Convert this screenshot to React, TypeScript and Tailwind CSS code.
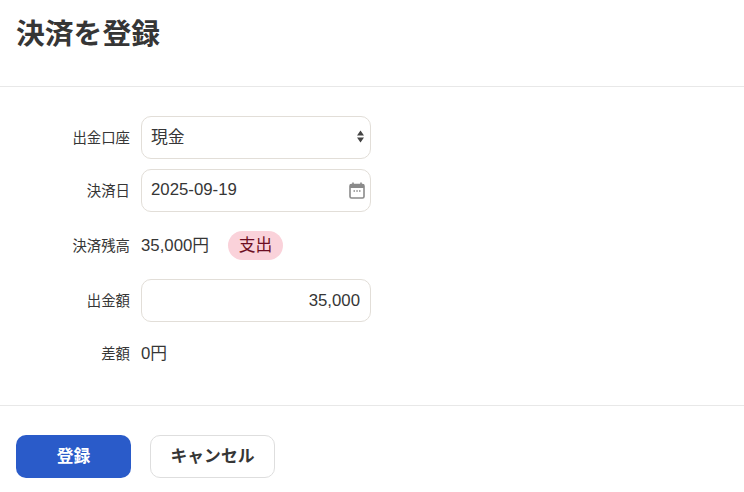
export default function App() {
  const label = "w-[130px] shrink-0 text-right text-[14.4px] leading-[20px] text-[#363636]";
  const box = "h-[43px] w-[230px] rounded-[10px] border border-[#e2ded8] bg-white text-[16.8px] text-[#363636] outline-none";
  return (
    <div className="h-[492px] w-[744px] overflow-hidden bg-white font-['Liberation_Sans','Noto_Sans_CJK_JP',sans-serif] text-[#363636]">
      <header className="flex h-[87px] items-start border-b border-[#e8e8e8] px-4 pt-[18px]">
        <h1 className="text-[28.8px] font-bold leading-[33px] text-[#363636]">決済を登録</h1>
      </header>
      <main className="flex h-[319px] flex-col border-b border-[#e8e8e8] pt-[29px]">
        <div className="flex h-[43px] items-center gap-[11px]">
          <div className={label}>出金口座</div>
          <div className="relative">
            <select defaultValue="現金" className={`${box} appearance-none border-[#dfdcdc] pl-[9px] pr-6`}>
              <option>現金</option>
            </select>
            <svg className="pointer-events-none absolute right-[7px] top-[14px]" width="7" height="13" viewBox="0 0 7 13" fill="#444">
              <path d="M3.5 0.5L7 5.5H0Z" />
              <path d="M0 7.5H7L3.5 12.5Z" />
            </svg>
          </div>
        </div>
        <div className="mt-[10px] flex h-[43px] items-center gap-[11px]">
          <div className={label}>決済日</div>
          <div className="relative">
            <input type="text" readOnly defaultValue="2025-09-19" className={`${box} px-[9px] pb-[2px]`} />
            <svg className="pointer-events-none absolute right-[6px] top-[13px]" width="16" height="17" viewBox="0 0 16 17" fill="none">
              <path d="M4 0.5V3M12 0.5V3" stroke="#8a8a8a" strokeWidth="1.6" />
              <rect x="1" y="2.5" width="14" height="13.5" rx="1.5" stroke="#8a8a8a" strokeWidth="1.6" />
              <rect x="1" y="2.5" width="14" height="3.5" fill="#8a8a8a" />
              <path d="M4.5 9h1.5M7.3 9h1.5M10 9h1.5" stroke="#8a8a8a" strokeWidth="1.4" />
            </svg>
          </div>
        </div>
        <div className="mt-[19px] flex h-[29px] items-center gap-[11px]">
          <div className={label}>決済残高</div>
          <span className="text-[16.8px]">35,000円</span>
          <span className="ml-[8px] flex h-[29px] w-[55px] items-center justify-center rounded-full bg-[#fad2da] text-[16.8px] text-[#6d0d22]">支出</span>
        </div>
        <div className="mt-[19px] flex h-[43px] items-center gap-[11px]">
          <div className={label}>出金額</div>
          <input readOnly defaultValue="35,000" className={`${box} px-[10px] text-right`} />
        </div>
        <div className="mt-[22px] flex h-[20px] items-center gap-[11px]">
          <div className={label}>差額</div>
          <span className="text-[16.8px]">0円</span>
        </div>
      </main>
      <footer className="flex items-start gap-[19px] px-4 pt-[29px]">
        <button className="h-[43px] w-[115px] rounded-[10px] bg-[#2a5bc9] text-[16.8px] font-bold text-white">登録</button>
        <button className="h-[43px] w-[125px] rounded-[10px] border border-[#dedede] bg-white text-[16.8px] font-bold text-[#363636]">キャンセル</button>
      </footer>
    </div>
  );
}
